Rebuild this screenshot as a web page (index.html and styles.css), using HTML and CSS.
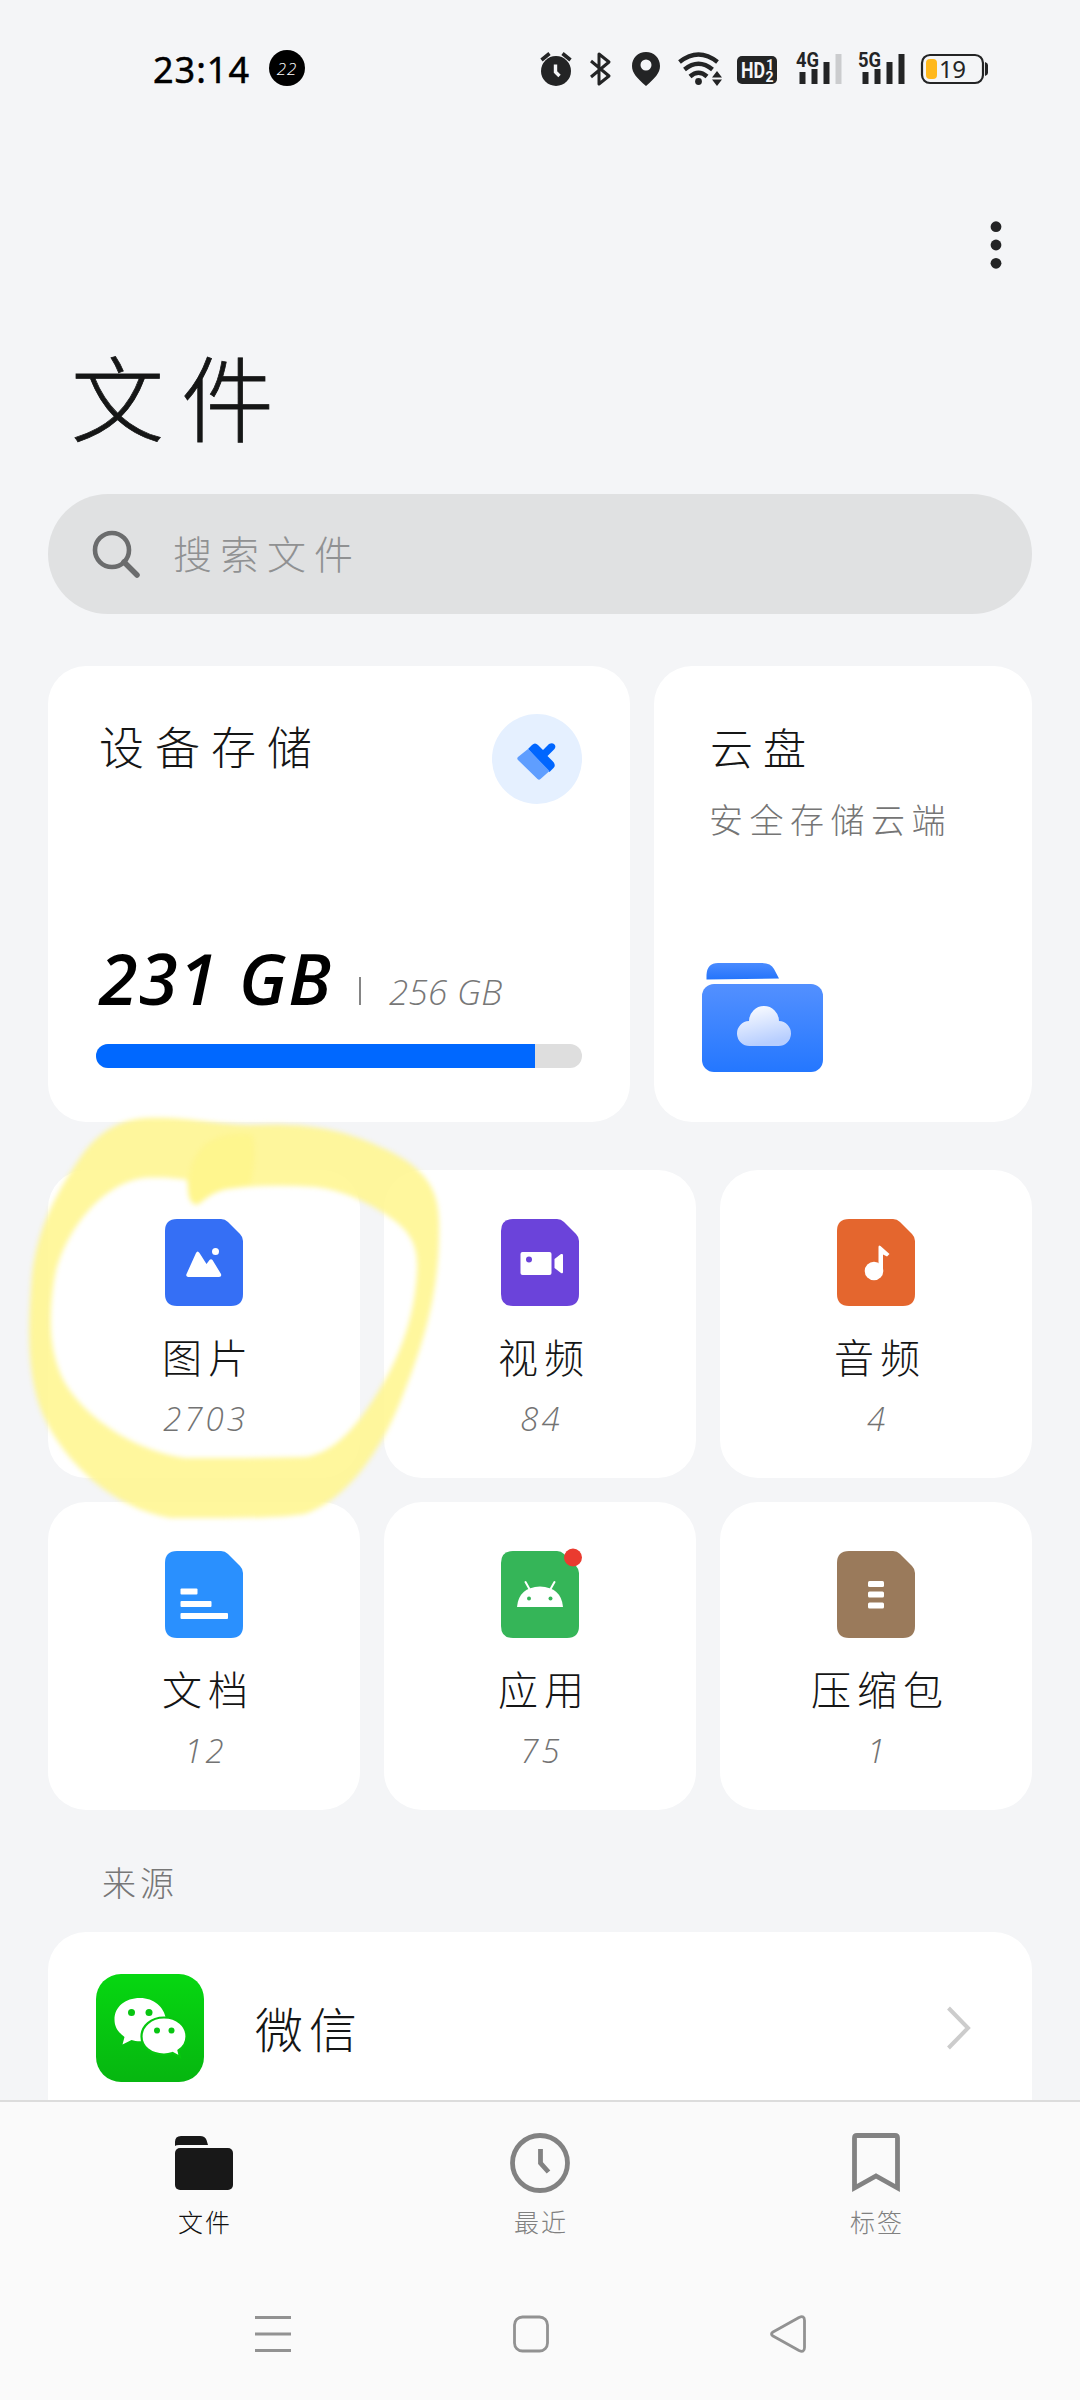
FILE: index.html
```html
<!DOCTYPE html>
<html lang="zh-CN">
<head>
<meta charset="utf-8">
<title>文件</title>
<link rel="stylesheet" href="styles.css">
</head>
<body>
<div class="phone">
  <header class="status">
    <span class="clock">23:14</span>
    <span class="badge">22</span>
    <svg class="status-icons" width="460" height="40" viewBox="536 48 460 40">
      <g fill="#232425">
        <circle cx="556" cy="71" r="15"/>
        <path d="M541.500 60l8-6.500M570.500 60l-8-6.500" stroke="#232425" stroke-width="3.600"/>
        <path d="M555.500 64.500v7.500l4 4" fill="none" stroke="#f4f5f7" stroke-width="3.400"/>
        <path d="M591 61l18 15-10 8V54l10 8-18 15" fill="none" stroke="#232425" stroke-width="3" stroke-linejoin="round"/>
        <path fill-rule="evenodd" d="M646 52c8 0 14 6 14 14 0 7-5 12-14 20-9-8-14-13-14-20 0-8 6-14 14-14zm0 7.500a5.500 5.500 0 1 0 0 11 5.500 5.500 0 0 0 0-11z"/>
        <g fill="none" stroke="#232425" stroke-width="4.400">
          <path d="M679.500 62q19-15 38 0"/><path d="M684.500 69.500q14-11.500 28 0"/><path d="M690 76.500q8.500-7.500 17 0"/>
        </g>
        <circle cx="698.500" cy="81.500" r="3.400"/>
        <path d="M712 77.500l5-6.500 5 6.500zM712 79.500l5 6.500 5-6.500z"/>
        <rect x="737" y="56" width="40" height="28" rx="5"/>
        <g font-family="Roboto, sans-serif" font-weight="700">
          <text x="741" y="77.500" font-size="21.500" fill="#f4f5f7" textLength="24" lengthAdjust="spacingAndGlyphs">HD</text>
          <text x="766" y="69.500" font-size="14" fill="#f4f5f7">1</text>
          <text x="765.500" y="81.500" font-size="14" fill="#f4f5f7">2</text>
          <text x="796" y="67" font-size="20" textLength="23" lengthAdjust="spacingAndGlyphs">4G</text>
          <text x="858" y="67" font-size="20" textLength="23" lengthAdjust="spacingAndGlyphs">5G</text>
        </g>
        <path d="M799.500 72h6v12h-6zM811.500 69h6v15h-6zM823.500 62h6v22h-6zM862.500 72h6v12h-6zM874.500 69h6v15h-6zM886.500 62h6v22h-6zM898.500 54h6v30h-6z"/>
        <path d="M835.500 54h6v30h-6z" fill="#cbccce"/>
        <rect x="922" y="55" width="61" height="28" rx="8" fill="none" stroke="#232425" stroke-width="2.200"/>
        <path d="M985 62q3 1 3 3v8q0 2-3 3z"/>
        <rect x="926" y="59" width="11" height="20" rx="4" fill="#ffb81c"/>
        <text x="939" y="78" font-family="'Noto Sans', sans-serif" font-size="24" textLength="27">19</text>
      </g>
    </svg>
  </header>

  <main class="content">
    <div class="toolbar">
      <svg width="12" height="48" viewBox="0 0 12 48" fill="#232425"><circle cx="6" cy="5.700" r="5.400"/><circle cx="6" cy="24" r="5.400"/><circle cx="6" cy="42.300" r="5.400"/></svg>
    </div>
    <h1 class="title">文件</h1>
    <div class="search">
      <svg width="48" height="48" viewBox="0 0 48 48" fill="none" stroke="#6b6c6d" stroke-width="4.600"><circle cx="20" cy="20" r="17"/><path d="M32 32l13 13" stroke-width="5.500" stroke-linecap="round"/></svg>
      <span>搜索文件</span>
    </div>

    <div class="overview">
      <section class="card storage">
        <div class="storage-head">
          <h2>设备存储</h2>
          <span class="clean">
            <svg width="42" height="42" viewBox="0 0 42 42"><path d="M12 11l4-4q3-3 6 0l5 5 6-6q3-1.500 5 0 2.500 2 .5 5l-7 7 5 5q4 4 1 7l-4 4z" fill="#06f"/><path d="M12 11l21.500 22-9 8q-1.500 1.500-3 0L2 22q-1.500-1.500 0-3z" fill="#5f9eff"/></svg>
          </span>
        </div>
        <div class="usage"><strong>231 GB</strong><i></i><span>256 GB</span></div>
        <div class="meter"><div class="meter-fill" style="width:90.300%"></div></div>
      </section>
      <section class="card cloud">
        <h2>云盘</h2>
        <p>安全存储云端</p>
        <svg width="122" height="110" viewBox="0 0 122 110">
          <defs>
            <linearGradient id="tab" x1="0" y1="0" x2="0" y2="1"><stop offset="0" stop-color="#4a8bff"/><stop offset="1" stop-color="#2474fb"/></linearGradient>
            <linearGradient id="fold" x1="0" y1="0" x2="0" y2="1"><stop offset="0" stop-color="#5390ff"/><stop offset="1" stop-color="#2477ff"/></linearGradient>
            <linearGradient id="puff" x1="0" y1="0" x2=".3" y2="1"><stop offset="0" stop-color="#fff"/><stop offset="1" stop-color="#b7ceff"/></linearGradient>
          </defs>
          <path d="M4.500 16.500V12Q5 0 16 0h44q9 0 12 6l5 9.500z" fill="url(#tab)"/>
          <rect y="21" width="121" height="88" rx="12" fill="url(#fold)"/>
          <path d="M47 58a15 15 0 0 1 30 0 12.500 12.500 0 0 1-1 25H48a12.500 12.500 0 0 1-1-25z" fill="url(#puff)"/>
        </svg>
      </section>
    </div>

    <div class="categories">
      <div class="card category">
        <svg width="78" height="88" viewBox="0 0 78 88"><path d="M12 0h44q4 0 7 3l12 12q3 3 3 7v53q0 12-12 12H12Q0 87 0 75V12Q0 0 12 0z" fill="#356ff5"/><path d="M22 54l9-20q1.500-3 3.500 0l7 11 3-4q1.500-1.500 3 0l8.500 14q1 3-2 3H23q-3-.5-1-4z" fill="#fff"/><circle cx="50.500" cy="32.500" r="3.500" fill="#fff"/></svg>
        <h3>图片</h3><p>2703</p>
      </div>
      <div class="card category">
        <svg width="78" height="88" viewBox="0 0 78 88"><path d="M12 0h44q4 0 7 3l12 12q3 3 3 7v53q0 12-12 12H12Q0 87 0 75V12Q0 0 12 0z" fill="#6b43da"/><rect x="19.500" y="33" width="31" height="23" rx="2" fill="#fff"/><path d="M53.500 40l6.500-5q2-.5 2 1v17q0 2-2 1l-6.500-5z" fill="#fff"/><circle cx="28" cy="40.500" r="3" fill="#6b43da"/></svg>
        <h3>视频</h3><p>84</p>
      </div>
      <div class="card category">
        <svg width="78" height="88" viewBox="0 0 78 88"><path d="M12 0h44q4 0 7 3l12 12q3 3 3 7v53q0 12-12 12H12Q0 87 0 75V12Q0 0 12 0z" fill="#e4662e"/><circle cx="37" cy="52" r="9.300" fill="#fff"/><path d="M41.500 52V28q0-2.500 2-1l9 8-2.500 2.500-4-2V52z" fill="#fff"/></svg>
        <h3>音频</h3><p>4</p>
      </div>
      <div class="card category">
        <svg width="78" height="88" viewBox="0 0 78 88"><path d="M12 0h44q4 0 7 3l12 12q3 3 3 7v53q0 12-12 12H12Q0 87 0 75V12Q0 0 12 0z" fill="#2a90fe"/><g fill="#fff"><rect x="15.500" y="37.500" width="17" height="6" rx="1"/><rect x="15.500" y="50" width="31" height="6" rx="1"/><rect x="15.500" y="62" width="47.500" height="6" rx="1"/></g></svg>
        <h3>文档</h3><p>12</p>
      </div>
      <div class="card category">
        <svg class="with-dot" width="78" height="88" viewBox="0 0 78 88"><path d="M12 0h44q4 0 7 3l12 12q3 3 3 7v53q0 12-12 12H12Q0 87 0 75V12Q0 0 12 0z" fill="#35b558"/><path d="M16 56q1.500-19.500 23-20.500 21.500 1 23 20.500z" fill="#fff"/><path d="M24.500 31l4.500 8M53.500 31L49 39" stroke="#fff" stroke-width="2" stroke-linecap="round"/><circle cx="28" cy="47.500" r="2" fill="#35b558"/><circle cx="49.500" cy="47.500" r="2" fill="#35b558"/><circle cx="72" cy="6.500" r="9" fill="#ea3b2f"/></svg>
        <h3>应用</h3><p>75</p>
      </div>
      <div class="card category">
        <svg width="78" height="88" viewBox="0 0 78 88"><path d="M12 0h44q4 0 7 3l12 12q3 3 3 7v53q0 12-12 12H12Q0 87 0 75V12Q0 0 12 0z" fill="#9a7a5b"/><g fill="#fff"><rect x="31" y="30" width="16" height="6" rx="1.500"/><rect x="31" y="40.500" width="16" height="6" rx="1.500"/><rect x="31" y="51.500" width="16" height="6" rx="1.500"/></g></svg>
        <h3>压缩包</h3><p>1</p>
      </div>
      <svg class="marker" width="430" height="420" viewBox="20 1110 430 420">
        <path fill="#fff68c" fill-opacity=".85" fill-rule="evenodd" d="M145 1118C185 1116 210 1124 250 1125C310 1122 345 1130 385 1149C425 1168 438 1188 439 1220C441 1290 423 1345 403 1395C380 1455 345 1500 305 1514C275 1519 215 1518 170 1518C115 1508 66 1466 43 1415C26 1375 28 1325 32 1275C38 1225 58 1190 82 1155C98 1133 118 1120 145 1118ZM143 1178C158 1177 175 1178 187 1180C189 1192 187 1203 197 1205C206 1200 212 1191 227 1189C255 1185 285 1185 315 1187C345 1190 375 1206 395 1221C413 1235 418 1250 417 1270C415 1320 397 1362 378 1392C355 1430 332 1453 306 1457C270 1458 230 1458 185 1458C145 1453 90 1425 65 1383C47 1350 49 1310 55 1275C64 1235 98 1185 143 1178Z"/>
        <path fill="#fff57c" fill-opacity=".45" d="M204 1145Q225 1130 253 1135Q257 1160 250 1185L227 1189Q211 1193 197 1204Q187 1204 188 1181Q190 1160 204 1145Z"/>
      </svg>
    </div>

    <h4 class="source-label">来源</h4>
    <section class="source">
      <svg width="108" height="108" viewBox="0 0 108 108">
        <defs><linearGradient id="chat" x1="0" y1="0" x2="0" y2="1"><stop offset="0" stop-color="#06d711"/><stop offset="1" stop-color="#06b610"/></linearGradient></defs>
        <rect width="108" height="108" rx="25" fill="url(#chat)"/>
        <path d="M44 24C29 24 18.500 33 18.500 45.500c0 8 4 13 10 17.500l-2 7.500 9-4.500c4 1.500 9 1.500 13 1L70 45C68 33 58 24 44 24z" fill="#fff"/>
        <path d="M68 43.500c13 0 22.500 8 22.500 19 0 6.500-3.500 11-8 14l1.500 6.500-7.500-4c-3 1-6 1.500-8.500 1.500-13 0-22.500-7.500-22.500-18s9.500-19 22.500-19z" fill="#fff" stroke="#07c60f" stroke-width="2.200"/>
        <g fill="#07c511"><circle cx="35.500" cy="38.500" r="3.500"/><circle cx="53" cy="38.500" r="3.500"/><circle cx="61" cy="56.500" r="3"/><circle cx="75.500" cy="56.500" r="3"/></g>
      </svg>
      <span>微信</span>
      <svg width="26" height="44" viewBox="0 0 26 44" fill="none" stroke="#ccc" stroke-width="4"><path d="M2.500 2l19.500 20-19.500 20"/></svg>
    </section>
  </main>

  <footer class="bottom">
    <nav class="tabs">
      <div class="tab active">
        <svg width="60" height="62" viewBox="0 0 60 62" fill="#181818"><path d="M1 14V10q0-6 6-6h19q5 0 6.500 4l1.500 5H5q-3 0-4 1z"/><rect x="1" y="16" width="58" height="42" rx="5"/></svg>
        <span>文件</span>
      </div>
      <div class="tab">
        <svg width="60" height="62" viewBox="0 0 60 62" fill="none" stroke="#828282" stroke-width="4.800"><circle cx="30" cy="31" r="27.500"/><path d="M30.500 17v14l8 9"/></svg>
        <span>最近</span>
      </div>
      <div class="tab">
        <svg width="60" height="62" viewBox="0 0 60 62" fill="none" stroke="#828282" stroke-width="4.800"><path d="M8.500 56V6q0-2.500 2.500-2.500h38Q51.500 3.500 51.500 6v50L30 44z"/></svg>
        <span>标签</span>
      </div>
    </nav>
    <div class="system">
      <svg width="36" height="38" viewBox="0 0 36 38" stroke="#929292" stroke-width="3.200"><path d="M0 2.500h36M0 19h36M0 35.500h36"/></svg>
      <svg width="36" height="38" viewBox="0 0 36 38" fill="none" stroke="#929292" stroke-width="2.800"><rect x="1.500" y="2" width="33" height="34" rx="8"/></svg>
      <svg width="36" height="38" viewBox="0 0 36 38" fill="none" stroke="#929292" stroke-width="2.800" stroke-linejoin="round"><path d="M29 2.500q5.500-2.500 5.500 3v27q0 5.500-5.500 3L3 21q-3-2 0-4z"/></svg>
    </div>
  </footer>
</div>
</body>
</html>
```
FILE: styles.css
```css
* { box-sizing: border-box; }
body { margin: 0; background: #f4f5f7; color: #151616; font-family: "Noto Sans", "Noto Sans CJK SC", sans-serif; }
h1, h2, h3, h4, p { margin: 0; font-weight: 300; }
svg { display: block; flex: none; }

.phone { width: 1080px; height: 2400px; display: flex; flex-direction: column; overflow: hidden; }

.status { height: 136px; flex: none; display: flex; align-items: center; padding: 0 84px 0 153px; }
.clock { width: 116px; padding-top: 3px; font: 400 36px/44px "Noto Sans", sans-serif; color: #000; letter-spacing: 1px; white-space: nowrap; -webkit-text-stroke: .5px #000; }
.badge { width: 36px; height: 36px; border-radius: 50%; background: #000; color: #fff; font: 300 italic 17px/37px "Open Sans", sans-serif; text-align: center; letter-spacing: 1px; }
.status-icons { margin-left: auto; }

.content { flex: 1; min-height: 0; overflow: hidden; padding: 0 48px; }
.toolbar { display: flex; justify-content: flex-end; padding: 85px 30px 0 0; }
.title { margin: 66px 0 39px 23px; font: 300 93px/120px "Noto Sans CJK SC", sans-serif; letter-spacing: 17px; -webkit-text-stroke: .8px #151616; }
.search { height: 120px; border-radius: 60px; background: #e0e1e2; display: flex; align-items: center; gap: 33px; padding-left: 44px; color: #909192; font: 300 39px/60px "Noto Sans CJK SC", sans-serif; letter-spacing: 8px; }
.search span { padding-bottom: 4px; }

.card { background: #fff; border-radius: 38px; }
.card h2 { font: 300 45px/60px "Noto Sans CJK SC", sans-serif; letter-spacing: 11px; }
.overview { display: grid; grid-template-columns: 582px 378px; gap: 24px; margin-top: 52px; height: 456px; }
.storage { padding: 48px; display: flex; flex-direction: column; }
.storage-head { display: flex; justify-content: space-between; align-items: flex-start; }
.storage-head h2 { padding: 2px 0 0 3px; }
.clean { width: 90px; height: 90px; border-radius: 50%; background: #e5f0ff; display: flex; align-items: center; justify-content: center; }
.usage { margin-top: auto; display: flex; align-items: baseline; padding-left: 3px; height: 84px; white-space: nowrap; font-family: "Open Sans", sans-serif; font-style: italic; line-height: 84px; }
.usage strong { width: 260px; font-size: 70px; font-weight: 600; letter-spacing: 1.500px; color: #000; }
.usage i { width: 2px; height: 28px; background: #858585; margin-right: 28px; }
.usage span { font-size: 35px; font-weight: 300; color: #777; letter-spacing: .3px; }
.meter { height: 24px; margin: 24px 0 6px; border-radius: 12px; background: #dedede; overflow: hidden; }
.meter-fill { height: 100%; background: #0068ff; }

.cloud { padding: 50px 48px 49px; display: flex; flex-direction: column; }
.cloud h2 { padding-left: 8px; font-size: 43px; letter-spacing: 10px; }
.cloud p { padding: 18px 0 0 7px; font: 300 34px/50px "Noto Sans CJK SC", sans-serif; letter-spacing: 6.500px; color: #757575; white-space: nowrap; }
.cloud svg { margin-top: auto; }

.categories { position: relative; display: grid; grid-template-columns: repeat(3, 312px); grid-auto-rows: 308px; gap: 24px; margin-top: 48px; }
.category { padding-top: 49px; display: flex; flex-direction: column; align-items: center; }
.category .with-dot { overflow: visible; }
.category h3 { margin-top: 19px; padding-left: 8px; font: 300 40px/60px "Noto Sans CJK SC", sans-serif; letter-spacing: 6px; }
.category p { margin-top: 13px; padding-left: 3px; font: 300 italic 33px/40px "Open Sans", sans-serif; letter-spacing: 3px; color: #737373; }
.marker { position: absolute; left: -28px; top: -60px; filter: blur(2.5px); }

.source-label { margin: 47px 0 25px 54px; font: 300 34px/50px "Noto Sans CJK SC", sans-serif; letter-spacing: 4px; color: #777; }
.source { height: 192px; padding: 0 60px 0 48px; display: flex; align-items: center; background: #fff; border-radius: 38px 38px 0 0; }
.source span { flex: 1; margin-left: 51px; padding-bottom: 3px; font: 300 48px/60px "Noto Sans CJK SC", sans-serif; letter-spacing: 6px; }

.bottom { flex: none; height: 300px; border-top: 2px solid #dcdcdc; background: #fafafa; }
.tabs { display: grid; grid-template-columns: repeat(3, 336px); justify-content: center; padding-top: 30px; }
.tab { display: flex; flex-direction: column; align-items: center; color: #808080; font: 300 25px/36px "Noto Sans CJK SC", sans-serif; letter-spacing: 2px; }
.tab span { margin-top: 9px; padding-left: 2px; }
.tab.active { color: #111; }
.system { display: flex; justify-content: space-between; padding: 76px 274px 0 255px; }
```
